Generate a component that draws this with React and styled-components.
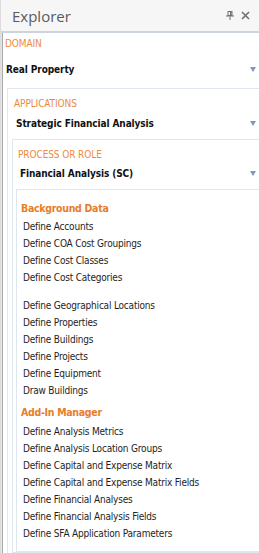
import React from 'react'
import styled, { createGlobalStyle } from 'styled-components'

const GlobalStyle = createGlobalStyle`
  html, body {
    margin: 0;
    padding: 0;
    background: #ffffff;
  }
  body {
    font-family: "DejaVu Sans Condensed", "DejaVu Sans", sans-serif;
    font-size: 10px;
    color: #1e1e1e;
  }
`

const Panel = styled.div`
  width: 259px;
  height: 553px;
  box-sizing: border-box;
  border-left: 1px solid #dcdcdc;
  box-shadow: inset 1px 0 0 #e6e6e6, inset 2px 0 0 #a9a9a9;
  overflow: hidden;
  display: flex;
  flex-direction: column;
`

const Header = styled.div`
  height: 31px;
  flex: 0 0 auto;
  display: flex;
  align-items: center;
  padding: 0 9px 0 11px;
  background: #f6f6f6;
  border-bottom: 2px solid #cdd4dd;
`

const Title = styled.div`
  flex: 1;
  font-family: "Open Sans", "Liberation Sans", sans-serif;
  font-size: 15px;
  color: #5a5a5a;
`

const HeaderIcons = styled.div`
  display: flex;
  align-items: center;
  gap: 7px;
  color: #707070;
`

const Body = styled.div`
  flex: 1;
  padding-left: 2px;
`

const Group = styled.div`
  margin-top: ${p => p.$top || 0}px;
  margin-left: ${p => p.$indent || 0}px;
  padding-top: ${p => p.$padTop || 0}px;
  padding-left: ${p => p.$padLeft || 0}px;
  padding-bottom: ${p => p.$padBottom || 0}px;
  border: ${p => (p.$boxed ? '1px solid #e0e6ee' : 'none')};
  border-right: none;
`

const Label = styled.div`
  margin-top: ${p => p.$top || 0}px;
  margin-left: ${p => p.$indent || 0}px;
  line-height: 16px;
  font-size: 10px;
  letter-spacing: -0.1px;
  color: #ec8a3e;
  text-transform: uppercase;
`

const ValueRow = styled.div`
  margin-top: ${p => p.$top || 0}px;
  margin-left: ${p => p.$indent || 0}px;
  height: 18px;
  display: flex;
  align-items: center;
  padding-right: 3px;
`

const Value = styled.div`
  flex: 1;
  font-weight: bold;
  font-size: 10px;
  letter-spacing: -0.1px;
  color: #111111;
`

const Arrow = styled.div`
  width: 0;
  height: 0;
  border-left: 3.5px solid transparent;
  border-right: 3.5px solid transparent;
  border-top: 5px solid #8496bd;
`

const Heading = styled.div`
  margin-top: ${p => p.$top || 0}px;
  margin-left: 4px;
  line-height: 16px;
  font-size: 10.5px;
  letter-spacing: -0.3px;
  font-weight: bold;
  color: #e77d29;
`

const ItemList = styled.div`
  margin-top: ${p => p.$top || 0}px;
  margin-left: 6px;
  display: flex;
  flex-direction: column;
`

const Item = styled.div`
  line-height: 17px;
  margin-top: ${p => (p.$gap ? 11 : 0)}px;
  letter-spacing: -0.2px;
  color: #1e1e1e;
`

const PinIcon = () => (
  <svg width="8" height="9" viewBox="0 0 8 9">
    <rect x="2" y="0.5" width="4" height="4" fill="none" stroke="currentColor" strokeWidth="1" />
    <rect x="4" y="1" width="1.5" height="3.5" fill="currentColor" />
    <rect x="0" y="4.5" width="8" height="1" fill="currentColor" />
    <rect x="3.5" y="5.5" width="1" height="3.5" fill="currentColor" />
  </svg>
)

const CloseIcon = () => (
  <svg width="9" height="9" viewBox="0 0 9 9">
    <path d="M1 1 L8 8 M8 1 L1 8" stroke="currentColor" strokeWidth="1.6" />
  </svg>
)

const background = [
  'Define Accounts',
  'Define COA Cost Groupings',
  'Define Cost Classes',
  'Define Cost Categories',
  { text: 'Define Geographical Locations', gap: true },
  'Define Properties',
  'Define Buildings',
  'Define Projects',
  'Define Equipment',
  'Draw Buildings',
]

const addIns = [
  'Define Analysis Metrics',
  'Define Analysis Location Groups',
  'Define Capital and Expense Matrix',
  'Define Capital and Expense Matrix Fields',
  'Define Financial Analyses',
  'Define Financial Analysis Fields',
  'Define SFA Application Parameters',
]

const Items = ({ list, top }) => (
  <ItemList $top={top}>
    {list.map(entry => {
      const item = typeof entry === 'string' ? { text: entry } : entry
      return (
        <Item key={item.text} $gap={item.gap}>
          {item.text}
        </Item>
      )
    })}
  </ItemList>
)

const App = () => (
  <>
    <GlobalStyle />
    <Panel>
      <Header>
        <Title>Explorer</Title>
        <HeaderIcons>
          <PinIcon />
          <CloseIcon />
        </HeaderIcons>
      </Header>
      <Body>
        <Label $top={3} $indent={2}>Domain</Label>
        <ValueRow $top={8} $indent={3}>
          <Value>Real Property</Value>
          <Arrow />
        </ValueRow>

        <Group $boxed $top={10} $indent={4} $padTop={7} $padLeft={3}>
          <Label $indent={3}>Applications</Label>
          <ValueRow $top={2} $indent={5}>
            <Value>Strategic Financial Analysis</Value>
            <Arrow />
          </ValueRow>

          <Group $boxed $top={7} $indent={1} $padTop={7} $padLeft={2}>
            <Label $indent={3}>Process or Role</Label>
            <ValueRow $top={1} $indent={5}>
              <Value>Financial Analysis (SC)</Value>
              <Arrow />
            </ValueRow>

            <Group $boxed $top={7} $indent={1} $padTop={10} $padBottom={9}>
              <Heading>Background Data</Heading>
              <Items list={background} top={2} />
              <Heading $top={5}>Add-In Manager</Heading>
              <Items list={addIns} top={3} />
            </Group>
          </Group>
        </Group>
      </Body>
    </Panel>
  </>
)

export default App
